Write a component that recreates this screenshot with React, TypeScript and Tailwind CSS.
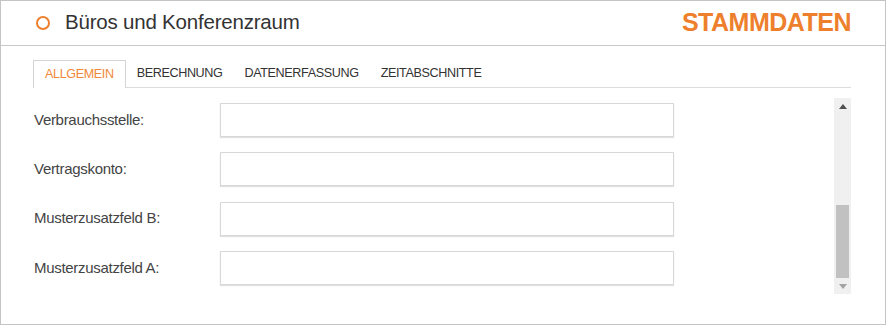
import React from "react";

const labels = ["Verbrauchsstelle:", "Vertragskonto:", "Musterzusatzfeld B:", "Musterzusatzfeld A:"];
const tabs = ["ALLGEMEIN", "BERECHNUNG", "DATENERFASSUNG", "ZEITABSCHNITTE"];

export default function App() {
  return (
    <div
      className="w-[886px] h-[325px] bg-white border border-[#c4c4c4] flex flex-col text-[#333]"
      style={{ fontFamily: '"Liberation Sans", Arial, sans-serif' }}
    >
      {/* header */}
      <div className="h-[45px] shrink-0 border-b border-[#c8c8c8] flex items-center pl-[35px] pr-[34px]">
        <span className="w-[14px] h-[14px] rounded-full border-2 border-[#ee7f2d] shrink-0" />
        <span className="ml-[15px] text-[20.5px] text-[#333] tracking-[-0.01em] leading-none mt-[-1px]">
          Büros und Konferenzraum
        </span>
        <span className="ml-auto text-[25px] font-bold text-[#ee7f2d] leading-none tracking-[-0.02em] mt-[-2px]">
          STAMMDATEN
        </span>
      </div>

      {/* body */}
      <div className="flex-1 flex flex-col pl-[32px] pr-[34px]">
        {/* tabs */}
        <div className="mt-[14px] h-[28px] flex items-end border-b border-[#dcdcdc]">
          {tabs.map((t, i) =>
            i === 0 ? (
              <div
                key={t}
                className="h-[28px] px-[11px] flex items-center border border-b-0 border-[#d4d4d4] bg-white mb-[-1px] text-[12.6px] text-[#f0883a] tracking-[-0.03em]"
              >
                {t}
              </div>
            ) : (
              <div key={t} className="h-[27px] px-[11px] flex items-center text-[12.6px] text-[#333] tracking-[-0.03em]">
                {t}
              </div>
            )
          )}
        </div>

        {/* content */}
        <div className="flex mt-[10px]">
          <div className="flex-1 flex flex-col gap-[15.3px] pt-[5px] pl-[1px]">
            {labels.map((l) => (
              <div key={l} className="flex items-center h-[34px]">
                <span className="w-[186px] text-[15px] text-[#444] tracking-[-0.02em]">{l}</span>
                <div className="w-[454px] h-[34px] border border-[#d8d8d8] bg-white shadow-[0_1px_1px_rgba(0,0,0,0.12)]" />
              </div>
            ))}
          </div>
          {/* scrollbar */}
          <div className="w-[17px] h-[196px] bg-[#f0f0f0] flex flex-col items-center">
            <div className="h-[17px] flex items-center justify-center">
              <svg width="8" height="5" viewBox="0 0 8 5">
                <path d="M0 5 L4 0 L8 5 Z" fill="#505050" />
              </svg>
            </div>
            <div className="flex-1" />
            <div className="w-[13px] h-[73px] bg-[#c1c1c1]" />
            <div className="h-[16px] flex items-center justify-center">
              <svg width="8" height="5" viewBox="0 0 8 5">
                <path d="M0 0 L4 5 L8 0 Z" fill="#a3a3a3" />
              </svg>
            </div>
          </div>
        </div>
      </div>
    </div>
  );
}
